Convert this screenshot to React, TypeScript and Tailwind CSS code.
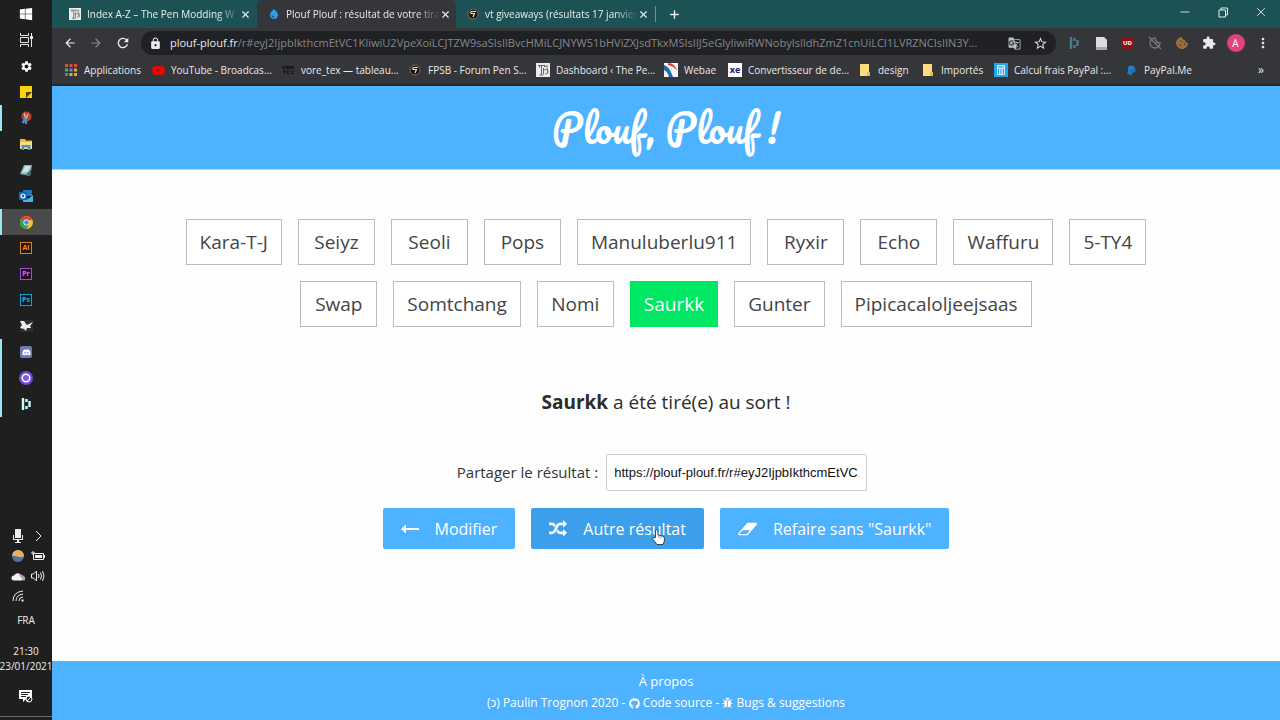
import type { ReactNode } from "react";
import clsx from "clsx";
import { Minus, Plus, X } from "lucide-react";
import { FaCookieBite, FaDiscord, FaGithub, FaPaypal, FaWindows, FaYoutube } from "react-icons/fa";
import {
  MdArrowBack,
  MdArrowForward,
  MdExtension,
  MdGTranslate,
  MdLock,
  MdMoreVert,
  MdRefresh,
  MdSettings,
  MdStarBorder,
  MdWaterDrop,
} from "react-icons/md";

const HASH =
  "r#eyJ2IjpbIkthcmEtVC1KIiwiU2VpeXoiLCJTZW9saSIsIlBvcHMiLCJNYW51bHViZXJsdTkxMSIsIlJ5eGlyIiwiRWNobyIsIldhZmZ1cnUiLCI1LVRZNCIsIlN3Y...";

const names = [
  "Kara-T-J",
  "Seiyz",
  "Seoli",
  "Pops",
  "Manuluberlu911",
  "Ryxir",
  "Echo",
  "Waffuru",
  "5-TY4",
  "Swap",
  "Somtchang",
  "Nomi",
  "Saurkk",
  "Gunter",
  "Pipicacaloljeejsaas",
];

const picked = "Saurkk";

/* ---------- small drawings ---------- */

const TaskViewIcon = () => (
  <svg width="15" height="14" viewBox="0 0 15 14" fill="none" stroke="#e5e5e5">
    <path d="M1.500 0v2.500h8V0M1.500 14v-2.500h8V14M1.500 4.500h8v5h-8zM12.500 0v14" />
    <path d="M11 3h3v3h-3z" fill="#e5e5e5" stroke="none" />
  </svg>
);

const StickyNoteIcon = () => (
  <svg width="12" height="12" viewBox="0 0 12 12">
    <path d="M0 0h12v12H0z" fill="#fcd20b" />
    <path d="M6 12V6h6z" fill="#4b4210" />
  </svg>
);

const SnipIcon = () => (
  <svg width="12" height="14" viewBox="0 0 12 14">
    <ellipse cx="6.500" cy="5.500" rx="5" ry="5" fill="#b5452f" />
    <path d="M4 2l2 6M8 3L6 8" stroke="#d8c4bd" strokeWidth="1.200" />
    <path d="M6 7L2.500 12M6 7v6" stroke="#4f8fc9" strokeWidth="2.200" />
  </svg>
);

const ExplorerIcon = () => (
  <svg width="12" height="12" viewBox="0 0 12 12">
    <path d="M0 1h5l1 1.500h6V11H0z" fill="#e9b941" />
    <path d="M0 4h12v7H0z" fill="#fbdc7e" />
    <path d="M1.500 12V7h9v5H8V9.500H4V12z" fill="#3f97d3" />
  </svg>
);

const NotepadIcon = () => (
  <svg width="13" height="13" viewBox="0 0 13 13">
    <path d="M4 1h8l-2 11-10-2z" fill="#7fb3b0" />
    <path d="M5 2h6l-3 6-6 1z" fill="#c9e4e0" />
    <path d="M12 4l-2 8-4-1z" fill="#486c6c" />
  </svg>
);

const OutlookIcon = () => (
  <svg width="14" height="12" viewBox="0 0 14 12">
    <path d="M4 0h9v6H4z" fill="#1a79cc" />
    <path d="M4 5l5 4 5-4v7H4z" fill="#42b3f0" />
    <path d="M0 2h8v8H0z" fill="#0f63b5" />
    <circle cx="4" cy="6" r="2" fill="none" stroke="#fff" strokeWidth="1.200" />
  </svg>
);

const ChromeIcon = () => (
  <svg width="13" height="13" viewBox="0 0 24 24">
    <circle cx="12" cy="12" r="12" fill="#fbc116" />
    <path d="M12 12L1.600 6A12 12 0 0 1 22.400 6z" fill="#e04436" />
    <path d="M12 12L1.600 6A12 12 0 0 0 12 24l5-9z" fill="#2fa351" />
    <circle cx="12" cy="12" r="5.500" fill="#fff" />
    <circle cx="12" cy="12" r="4.300" fill="#4486ee" />
  </svg>
);

const BirdIcon = () => (
  <svg width="13" height="12" viewBox="0 0 13 12">
    <path d="M0 0h13v12H0z" fill="#2e2e2e" />
    <path d="M0 1l4 0 2 3 1 1 6-3-3 4 1 2-4 0-1 3-2-2-4-1 2-3z" fill="#eee" />
  </svg>
);

const RingIcon = () => (
  <svg width="14" height="14" viewBox="0 0 14 14">
    <circle cx="7" cy="7" r="7" fill="#7048e0" />
    <circle cx="7" cy="7" r="3.800" fill="#7b5be8" stroke="#fff" strokeWidth="1.500" />
  </svg>
);

const BarsIcon = ({ color = "#d8f5f2", bg = "#10272b" }) => (
  <svg width="12" height="14" viewBox="0 0 12 14">
    <path d="M0 0h12v14H0z" fill={bg} />
    <path d="M3 1v12M6.500 2v3M6.500 9v3M9.500 4v6" stroke={color} strokeWidth="2.400" />
  </svg>
);

const AdobeIcon = ({ label, className }: { label: string; className: string }) => (
  <span className={clsx("flex h-3 w-3 items-center justify-center border text-[7px] font-bold", className)}>
    {label}
  </span>
);

const CoinIcon = () => (
  <svg width="12" height="12" viewBox="0 0 12 12">
    <circle cx="6" cy="6" r="5" fill="#17120f" stroke="#8c6b49" />
    <path d="M3 5.500L4.500 3.500H9M4 5.500h3.500L6 9" fill="none" stroke="#e6e0d8" strokeWidth="1.200" />
  </svg>
);

const LettersIcon = () => (
  <svg width="14" height="14" viewBox="0 0 14 14">
    <path d="M0 0h14v14H0z" fill="#ececec" />
    <path
      d="M2 2.500h7M3.500 2.500v2M5.500 3v9M3.500 12h4M7.500 5v6M8 3.500l4-.5M8 7c5-2 5 4 1 4M11 4.500l1 6"
      fill="none"
      stroke="#666"
    />
  </svg>
);

const ArrowIcon = () => (
  <svg width="18" height="12" viewBox="0 0 18 12" fill="currentColor">
    <path d="M0 6l5-4.500V5h13v2H5v3.500z" />
  </svg>
);

const ShuffleIcon = () => (
  <svg width="18" height="18" viewBox="0 0 1792 1792" fill="currentColor">
    <path d="M666 481q-60 92-137 273-22-45-37-72.5t-40.5-63.5-51-56.5-63-35-81.5-14.5h-224q-14 0-23-9t-9-23v-192q0-14 9-23t23-9h224q250 0 410 225zm1126 799q0 14-9 23l-320 320q-9 9-23 9-13 0-22.5-9.5t-9.5-22.5v-192q-32 0-85 .5t-81 1-73-1-71-5-64-10.5-63-18.5-58-28.5-59-40-55-53.5-56-69.5q59-93 136-273 22 45 37 72.5t40.5 63.5 51 56.5 63 35 81.5 14.5h256v-192q0-14 9-23t23-9q12 0 24 10l319 319q9 9 9 23zm0-896q0 14-9 23l-320 320q-9 9-23 9-13 0-22.5-9.5t-9.5-22.5v-192h-256q-48 0-87 15t-69 45-51 61.500-45 77.500q-32 62-78 171-29 66-49.500 111t-54 105-64 100-74 83-90 68.500-106.500 42-128 16.500h-224q-14 0-23-9t-9-23v-192q0-14 9-23t23-9h224q48 0 87-15t69-45 51-61.500 45-77.500q32-62 78-171 29-66 49.500-111t54-105 64-100 74-83 90-68.500 106.500-42 128-16.500h256v-192q0-14 9-23t23-9q12 0 24 10l319 319q9 9 9 23z" />
  </svg>
);

const EraserIcon = () => (
  <svg width="19" height="18" viewBox="-64 0 1920 1792" fill="currentColor">
    <path d="M832 1408l336-384h-768l-336 384h768zm1013-1077q15 34 9.500 71.500t-30.500 65.500l-896 1024q-38 44-96 44h-768q-38 0-69.500-20.500t-47.500-54.500q-15-34-9.500-71.500t30.500-65.500l896-1024q38-44 96-44h768q38 0 69.500 20.500t47.500 54.500z" />
  </svg>
);

const BugIcon = () => (
  <svg width="11" height="12" viewBox="0 0 1664 1792" fill="currentColor" className="inline">
    <path d="M1632 960q0 26-19 45t-45 19h-224q0 171-67 290l208 209q19 19 19 45t-19 45q-18 19-45 19t-45-19l-198-197q-5 5-15 13t-42 28.500-65 36.500-82 29-97 13v-896h-128v896q-51 0-101.500-13.500t-87-33-66-39-43.500-32.500l-15-14-183 207q-20 21-48 21-24 0-43-16-19-18-20.500-44.500t15.500-46.500l202-227q-58-114-58-274h-224q-26 0-45-19t-19-45 19-45 45-19h224v-294l-173-173q-19-19-19-45t19-45 45-19 45 19l173 173h844l173-173q19-19 45-19t45 19 19 45-19 45l-173 173v294h224q26 0 45 19t19 45zm-480-576h-640q0-133 93.500-226.500t226.500-93.500 226.500 93.500 93.500 226.500z" />
  </svg>
);

const HandCursor = () => (
  <svg width="13" height="16" viewBox="0 0 13 16" className="absolute top-[21px] left-[121px]">
    <path
      d="M3.500 8.500V2a1.200 1.200 0 0 1 2.400 0v4l5 1.200a2 2 0 0 1 1.500 2V12l-1.400 3.500H5L1 10.500C.2 9 1.500 8 2.500 9z"
      fill="#fff"
      stroke="#222"
      strokeWidth=".8"
    />
    <path d="M7 7v2M9 7.500v2" stroke="#555" strokeWidth=".6" />
  </svg>
);

/* ---------- windows taskbar ---------- */

type Task = { label: string; icon: ReactNode; open?: boolean; active?: boolean };

const tasks: Task[] = [
  { label: "Démarrer", icon: <FaWindows size={14} className="text-white" /> },
  { label: "Affichage des tâches", icon: <TaskViewIcon /> },
  { label: "Paramètres", icon: <MdSettings size={13} className="text-white" /> },
  { label: "Pense-bête", icon: <StickyNoteIcon /> },
  { label: "Capture", icon: <SnipIcon />, open: true },
  { label: "Explorateur", icon: <ExplorerIcon /> },
  { label: "Bloc-notes", icon: <NotepadIcon /> },
  { label: "Outlook", icon: <OutlookIcon /> },
  { label: "Chrome", icon: <ChromeIcon />, open: true, active: true },
  { label: "Illustrator", icon: <AdobeIcon label="Ai" className="border-[#d97f25] bg-[#2b1605] text-[#e98b2a]" /> },
  { label: "Premiere", icon: <AdobeIcon label="Pr" className="border-[#a34fc0] bg-[#260a30] text-[#c678dd]" /> },
  { label: "Photoshop", icon: <AdobeIcon label="Ps" className="border-[#1c9dbb] bg-[#04222d] text-[#27b4d6]" /> },
  { label: "Rhino", icon: <BirdIcon /> },
  {
    label: "Discord",
    icon: (
      <span className="flex h-3 w-3 items-center justify-center rounded-xs bg-[#6a7bb8]">
        <FaDiscord size={9} className="text-white" />
      </span>
    ),
    open: true,
  },
  { label: "Enregistreur", icon: <RingIcon />, open: true },
  { label: "Mixeur", icon: <BarsIcon />, open: true },
];

const Tray = () => (
  <div className="flex flex-col items-center text-[#eee]">
    <div className="ml-1 grid grid-cols-2 gap-x-1 *:flex *:h-5 *:w-4 *:items-center *:justify-center">
      <span>
        <svg width="10" height="14" viewBox="0 0 10 14" fill="currentColor">
          <path d="M2 0h6v9H2zM0 6h1v4h8V6h1v5H6v2h2v1H2v-1h2v-2H0z" />
        </svg>
      </span>
      <span>
        <svg width="7" height="12" viewBox="0 0 7 12" fill="none" stroke="currentColor">
          <path d="M1 1l5 5-5 5" />
        </svg>
      </span>
      <span>
        <svg width="12" height="12" viewBox="0 0 12 12">
          <circle cx="6" cy="6" r="6" fill="#5373a8" />
          <path d="M0 6a6 6 0 0 1 12 0c-4 3-8-1-12 0z" fill="#e5b262" />
        </svg>
      </span>
      <span>
        <svg width="14" height="10" viewBox="0 0 14 10" fill="none" stroke="currentColor">
          <path d="M2.500 2.500h10v6h-10zM13.500 4v3" />
          <path d="M4 4h7v3H4z" fill="currentColor" stroke="none" />
          <path d="M0 2h4M2 0v4" />
        </svg>
      </span>
      <span>
        <svg width="14" height="9" viewBox="0 0 14 9">
          <path d="M3 8.500a2.500 2.500 0 0 1 0-5 4 4 0 0 1 7-.5 3 3 0 0 1 1 5.500z" fill="#f4f4f4" />
          <path d="M8 3a4 4 0 0 1 5 1.500 2 2 0 0 1-1 4z" fill="#aaa" />
        </svg>
      </span>
      <span>
        <svg width="14" height="12" viewBox="0 0 14 12" fill="none" stroke="currentColor">
          <path d="M.500 4h2l3-3v10l-3-3h-2zM7.500 4q1 2 0 4M9.500 2.500q2 3.500 0 7M11.500 1q3 5 0 10" />
        </svg>
      </span>
      <span>
        <svg width="12" height="12" viewBox="0 0 12 12" fill="none" stroke="currentColor">
          <path d="M1 11Q1 2 11 1M4 11Q4 5 11 4M7 11q0-4 4-4" />
          <path d="M9.500 9.500h2v2h-2z" fill="currentColor" stroke="none" />
        </svg>
      </span>
    </div>
    <div className="mt-1.5 text-[10px] leading-4">FRA</div>
    <div className="mt-4 text-center text-[10px] leading-[15px] whitespace-nowrap">
      21:30
      <br />
      23/01/2021
    </div>
    <button aria-label="Notifications" className="mt-2.5 flex h-6 w-full items-center justify-center">
      <svg width="14" height="14" viewBox="0 0 14 14">
        <path d="M0 1h13v9H7l-3 3v-3H0z" fill="#fff" />
        <path d="M2 3.500h9M2 5.500h7M2 7.500h5" stroke="#222" />
        <circle cx="10" cy="10" r="3" fill="#222" stroke="#fff" />
        <path d="M8 12l4-4" stroke="#fff" />
      </svg>
    </button>
    <div className="mt-2 h-1 w-full border-t border-[#6b6b6b]" />
  </div>
);

const Taskbar = () => (
  <aside className="flex w-[52px] shrink-0 flex-col justify-between bg-[#1f1f1f]">
    <nav className="pt-px">
      {tasks.map(({ label, icon, open, active }) => (
        <button
          key={label}
          aria-label={label}
          className={clsx(
            "flex h-[26px] w-full items-center justify-center border-x-2 border-r-transparent",
            open ? "border-l-[#9be3f5]" : "border-l-transparent",
            active && "bg-[#4a4a4a]",
          )}
        >
          {icon}
        </button>
      ))}
    </nav>
    <Tray />
  </aside>
);

/* ---------- browser ---------- */

const Tab = ({ icon, title, active }: { icon: ReactNode; title: string; active?: boolean }) => (
  <div
    className={clsx(
      "flex w-[199px] items-center rounded-t-md pr-1.5 pl-[11px]",
      active ? "bg-[#35363a] text-[#e8eaed]" : "text-[#e6efef]",
    )}
  >
    <span className="mr-1.5 flex w-3 shrink-0 justify-center">{icon}</span>
    <span className="flex-1 mask-r-from-85% whitespace-nowrap">{title}</span>
    <button aria-label="Fermer l'onglet">
      <X size={11} strokeWidth={2.5} />
    </button>
  </div>
);

const Folder = () => (
  <svg width="12" height="12" viewBox="0 0 12 12">
    <path d="M1 0h9v8h1v4H1z" fill="#fbdc7e" />
    <path d="M8 8h3v4H8z" fill="#e9c04f" />
  </svg>
);

const bookmarks = [
  {
    title: "Applications",
    width: "w-[87px]",
    icon: (
      <svg width="12" height="12" viewBox="0 0 12 12">
        <path d="M0 0h3v3H0zM4.500 0h3v3h-3zM9 0h3v3H9z" fill="#d9503f" />
        <path d="M0 4.500h3v3H0z" fill="#4caf6a" />
        <path d="M4.500 4.500h3v3h-3z" fill="#4a8fe8" />
        <path d="M9 4.500h3v3H9zM9 9h3v3H9zM4.500 9h3v3h-3z" fill="#e0ad35" />
        <path d="M0 9h3v3H0z" fill="#3f9d5c" />
      </svg>
    ),
  },
  { title: "YouTube - Broadcas...", width: "w-[130px]", icon: <FaYoutube size={13} className="text-[#f00]" /> },
  {
    title: "vore_tex — tableau...",
    width: "w-[127px]",
    icon: (
      <svg width="12" height="8" viewBox="0 0 12 8" fill="none" stroke="#111">
        <path d="M0 0l1.500 3L3 0M4 .500h2v2H4zM7 3V.500h2L7.500 2l1.500 1M12 .500h-2v2h2M1 5h3M2.500 5v3M7.500 5H5.500v2.500h2M9 5l2.500 3M11.500 5L9 8" />
      </svg>
    ),
  },
  { title: "FPSB - Forum Pen S...", width: "w-[128px]", icon: <CoinIcon /> },
  { title: "Dashboard ‹ The Pe...", width: "w-[128px]", icon: <LettersIcon /> },
  {
    title: "Webae",
    width: "w-[64px]",
    icon: (
      <svg width="14" height="14" viewBox="0 0 14 14">
        <path d="M0 0h14v14H0z" fill="#f4f4f4" />
        <path d="M0 2q5 1 9 12H5Q4 9 0 7z" fill="#1f6aa8" />
        <path d="M4 0q7 0 9 8-3-5-9-6z" fill="#d2402f" />
      </svg>
    ),
  },
  {
    title: "Convertisseur de de...",
    width: "w-[130px]",
    icon: (
      <span className="flex h-[14px] w-[14px] items-center justify-center bg-white text-[9px] font-bold text-[#1a1a7a]">
        xe
      </span>
    ),
  },
  { title: "design", width: "w-[63px]", icon: <Folder /> },
  { title: "Importés", width: "w-[73px]", icon: <Folder /> },
  {
    title: "Calcul frais PayPal :...",
    width: "w-[130px]",
    icon: (
      <svg width="14" height="14" viewBox="0 0 14 14">
        <path d="M0 0h14v14H0z" fill="#25a4ec" />
        <path d="M3 2h8v10H3z" fill="#bfe6fb" />
        <path d="M4 4h6M4.500 6v5M7 6v5M9.500 6v5" stroke="#25a4ec" />
      </svg>
    ),
  },
  { title: "PayPal.Me", width: "w-[80px]", icon: <FaPaypal size={11} className="text-[#1f7fd0]" /> },
];

const Browser = () => (
  <div className="border-b-2 border-[#26272a] bg-[#35363a] text-[#e8eaed]">
    <div className="flex h-7 bg-[#1c5254] pl-1.5 text-[10px]">
      <Tab icon={<LettersIcon />} title="Index A-Z – The Pen Modding W" />
      <Tab icon={<MdWaterDrop size={14} className="text-[#2f9df0]" />} title="Plouf Plouf : résultat de votre tira" active />
      <Tab icon={<CoinIcon />} title="vt giveaways (résultats 17 janvier" />
      <div className="my-1.5 w-px bg-[#6f9596]" />
      <button aria-label="Nouvel onglet" className="ml-3">
        <Plus size={13} strokeWidth={2.5} />
      </button>
      <div className="ml-auto flex items-center gap-6 pr-3 pb-1">
        <button aria-label="Réduire">
          <Minus size={14} strokeWidth={1.5} />
        </button>
        <button aria-label="Restaurer">
          <svg width="14" height="11" viewBox="0 0 14 11" fill="none" stroke="currentColor">
            <path d="M3 3h6.500v7H3zM5 3V1h6.500v7h-2" />
          </svg>
        </button>
        <button aria-label="Fermer">
          <X size={14} strokeWidth={1.5} />
        </button>
      </div>
    </div>

    <div className="flex h-[30px] items-center pr-1 pl-[11px]">
      <div className="flex items-center gap-3">
        <button aria-label="Précédent">
          <MdArrowBack size={14} />
        </button>
        <button aria-label="Suivant" className="text-[#85878b]">
          <MdArrowForward size={14} />
        </button>
        <button aria-label="Actualiser">
          <MdRefresh size={16} />
        </button>
      </div>
      <div className="mr-1 ml-2.5 flex h-6 min-w-0 flex-1 items-center gap-2 rounded-full bg-[#202124] px-2">
        <MdLock size={13} className="shrink-0" />
        <div className="min-w-0 flex-1 overflow-hidden text-[11px] whitespace-nowrap text-[#85888c]">
          <span className="text-[#e8eaed]">plouf-plouf.fr</span>/{HASH}
        </div>
        <MdGTranslate size={13} className="shrink-0 text-[#bdc1c6]" />
        <MdStarBorder size={15} className="ml-1 shrink-0 text-[#dfe1e5]" />
      </div>
      <div className="flex *:flex *:w-[27px] *:items-center *:justify-center">
        <span>
          <BarsIcon color="#447e8c" bg="#35363a" />
        </span>
        <span>
          <svg width="12" height="13" viewBox="0 0 12 13">
            <path d="M1 0h8l3 3v10H1z" fill="#ddd" />
            <path d="M1 10h11v3H1z" fill="#aaa" />
          </svg>
        </span>
        <span>
          <span className="flex h-[13px] w-3 items-center justify-center rounded-b-md bg-[#8e1016] text-[6px] font-bold text-white">
            UD
          </span>
        </span>
        <span>
          <svg width="14" height="14" viewBox="0 0 14 14" fill="none" stroke="#77797d" strokeWidth="1.3">
            <path d="M7 2a5 5 0 1 0 5 5q-4 0-5-5zM1 1l12 12" />
          </svg>
        </span>
        <span>
          <FaCookieBite size={12} className="text-[#9a6d3f]" />
        </span>
        <span>
          <MdExtension size={14} />
        </span>
        <span>
          <span className="flex h-[18px] w-[18px] items-center justify-center rounded-full bg-[#e6407f] text-[10px] text-white">
            A
          </span>
        </span>
        <span>
          <MdMoreVert size={16} />
        </span>
      </div>
    </div>

    <div className="flex h-[26px] items-center pr-3 pb-0.5 pl-3 text-[10px]">
      {bookmarks.map(({ title, width, icon }) => (
        <a key={title} href="#" className={clsx("flex shrink-0 items-center gap-1.5 whitespace-nowrap", width)}>
          <span className="flex w-3.5 shrink-0 justify-center">{icon}</span>
          {title}
        </a>
      ))}
      <button aria-label="Autres favoris" className="mr-1 ml-auto text-xs leading-4">
        »
      </button>
    </div>
  </div>
);

/* ---------- page ---------- */

const ActionButton = ({ icon, children, hovered }: { icon: ReactNode; children: ReactNode; hovered?: boolean }) => (
  <button
    className={clsx(
      "relative flex h-[41px] items-center gap-4 rounded-xs px-[18px] text-base text-white",
      hovered ? "bg-[#3b9feb]" : "bg-[#4db2ff]",
    )}
  >
    {icon}
    {children}
  </button>
);

const Page = () => (
  <>
    <header className="flex h-[84px] items-center justify-center border-b border-[#a9d6f7] bg-[#4db2ff]">
      <h1 className="font-[Pacifico,Lato,cursive] text-[38px] leading-none text-white">Plouf, Plouf !</h1>
    </header>

    <main className="flex flex-1 flex-col items-center bg-[#fefefe] pt-[49px]">
      <ul className="flex max-w-[1010px] flex-wrap justify-center gap-4 text-[19px] text-[#444]">
        {names.map((name) => (
          <li
            key={name}
            className={clsx(
              "flex h-[46px] min-w-[77px] items-center justify-center border px-[13px]",
              name === picked ? "border-[#00e35c] bg-[#00e763] text-white" : "border-[#bbb] bg-white",
            )}
          >
            {name}
          </li>
        ))}
      </ul>

      <p className="mt-[59px] text-[19px] leading-8 text-[#2b2b2b]">
        <strong>{picked}</strong> a été tiré(e) au sort !
      </p>

      <div className="mt-9 mr-2 flex items-center gap-2 text-[15px] text-[#333]">
        <label htmlFor="share">Partager le résultat :</label>
        <input
          id="share"
          readOnly
          value={`https://plouf-plouf.fr/${HASH}`}
          className="h-[37px] w-[261px] rounded-xs border border-[#ccc] bg-white px-[7px] font-[Liberation_Sans,Arial,sans-serif] text-[13px] text-[#111]"
        />
      </div>

      <div className="mt-[17px] flex gap-4">
        <ActionButton icon={<ArrowIcon />}>Modifier</ActionButton>
        <ActionButton icon={<ShuffleIcon />} hovered>
          Autre résultat
          <HandCursor />
        </ActionButton>
        <ActionButton icon={<EraserIcon />}>Refaire sans "{picked}"</ActionButton>
      </div>
    </main>

    <footer className="flex h-[59px] flex-col items-center justify-center bg-[#4db2ff] text-white">
      <a href="#" className="text-[13px] leading-6">
        À propos
      </a>
      <p className="text-xs leading-5">
        (ɔ) Paulin Trognon 2020 -{" "}
        <a href="#">
          <FaGithub size={11} className="inline" /> Code source
        </a>{" "}
        -{" "}
        <a href="#">
          <BugIcon /> Bugs &amp; suggestions
        </a>
      </p>
    </footer>
  </>
);

const App = () => (
  <div className="flex min-h-screen font-[Open_Sans,Noto_Sans,sans-serif]">
    <Taskbar />
    <div className="flex min-w-0 flex-1 flex-col">
      <Browser />
      <Page />
    </div>
  </div>
);

export default App;
